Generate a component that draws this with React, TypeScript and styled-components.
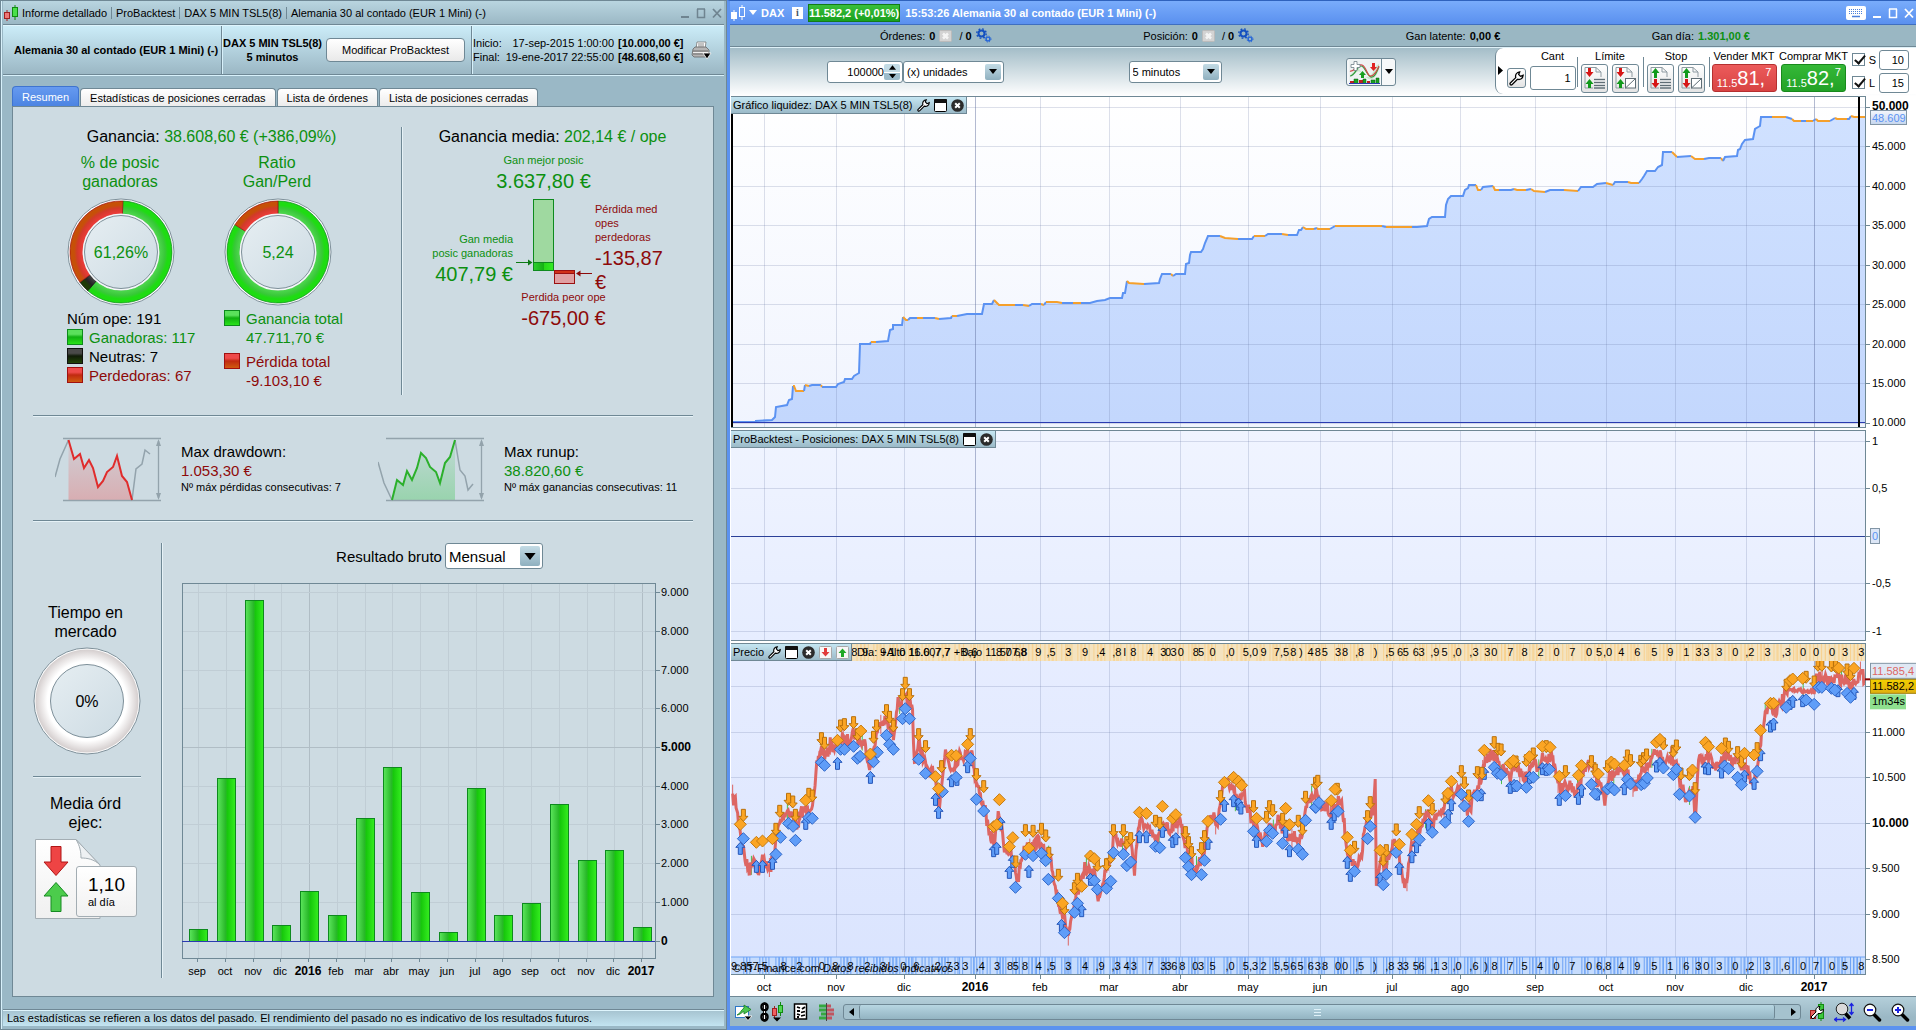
import React, { useLayoutEffect, useRef, useState } from "react";
import styled, { createGlobalStyle, css } from "styled-components";

const GREEN = "#0c9010";
const RED = "#8d0a0a";
const EDGE = "#6f8895";

const Global = createGlobalStyle`
  * { box-sizing: border-box; }
  body { margin: 0; background: #9ab8c6; color: #000; font: 11px/14px "Liberation Sans", Arial, sans-serif; }
  button, input, select { font: inherit; color: inherit; }
  svg { display: block; flex: none; }
  svg text { font-family: "Liberation Sans", Arial, sans-serif; font-size: 11px; }
`;

/* ---------- shared ---------- */

function useSize(w0: number, h0: number) {
  const ref = useRef<HTMLDivElement>(null);
  const [size, setSize] = useState({ w: w0, h: h0 });
  useLayoutEffect(() => {
    const el = ref.current;
    if (!el) return;
    const read = () => setSize({ w: el.clientWidth, h: el.clientHeight });
    read();
    const ro = new ResizeObserver(read);
    ro.observe(el);
    return () => ro.disconnect();
  }, []);
  return { ref, ...size };
}

const Shell = styled.div`
  display: grid;
  grid-template-columns: minmax(0, 727fr) minmax(0, 1189fr);
  height: 100vh;
  min-height: 960px;
`;

const PlainButton = styled.button`
  display: flex;
  align-items: center;
  justify-content: center;
  padding: 0;
  border: 0;
  background: none;
`;

const Field = styled.span<{ $w: number; $h: number }>`
  display: grid;
  align-items: center;
  flex: none;
  width: ${(p) => p.$w}px;
  height: ${(p) => p.$h}px;
  background: #fff;
  border: 1px solid ${EDGE};
  border-radius: 3px;
  > * { grid-area: 1 / 1; }
`;

const NativeSelect = styled.select<{ $size: number }>`
  appearance: none;
  width: 100%;
  height: 100%;
  border: 0;
  background: transparent;
  padding: 0 24px 0 3px;
  font-size: ${(p) => p.$size}px;
`;

const TextInput = styled.input`
  width: 100%;
  height: 100%;
  min-width: 0;
  border: 0;
  background: transparent;
  text-align: right;
  padding: 0 4px;
`;

const AmountInput = styled(TextInput)`
  padding-right: 18px;
`;

const Drop = styled.span`
  justify-self: end;
  display: grid;
  place-items: center;
  width: 16px;
  height: calc(100% - 4px);
  margin-right: 2px;
  border-radius: 2px;
  background: linear-gradient(#c3dbe5, #8fb0bf);
  pointer-events: none;
`;

const BigDrop = styled(Drop)`
  width: 20px;
`;

const Spin = styled(Drop)`
  gap: 1px;
  background: linear-gradient(#c3dbe5 48%, #fff 48%, #fff 54%, #9dbccb 54%);
`;

const Down = ({ w = 8 }: { w?: number }) => (
  <svg width={w} height={w / 2 + 1} viewBox="0 0 8 5"><path d="M0 0H8L4 5Z" /></svg>
);

const Up = () => (
  <svg width="7" height="5" viewBox="0 0 8 5"><path d="M0 5H8L4 0Z" /></svg>
);

const Candles = ({ a, b, la, lb }: { a: string; b: string; la: string; lb: string }) => (
  <svg width="17" height="18" viewBox="0 0 17 18">
    <path d="M4 6V17" stroke={la} />
    <rect x="1.5" y="8.5" width="5" height="6" fill={a} stroke={la} />
    <path d="M12 1V3.500M12 12.500V16" stroke={lb} />
    <rect x="9.5" y="3.5" width="5" height="9" fill={b} stroke={lb} />
  </svg>
);

/* ---------- report window ---------- */

const Report = styled.section`
  display: flex;
  flex-direction: column;
  min-width: 0;
  border: 1px solid ${EDGE};
  padding: 0 2px 3px 2px;
  background: #9ab8c6;
  box-shadow: inset 1px 0 #d8f1fb;
`;

const ReportTitle = styled.header`
  display: flex;
  align-items: center;
  height: 24px;
  flex: none;
  padding: 0 2px 0 0;
  background: linear-gradient(#b9d5e0, #9bb8c5);
  border-bottom: 1px solid ${EDGE};
`;

const Crumb = styled.span`
  padding: 0 4px;
  border-left: 1px solid #6f8895;
  line-height: 12px;
  white-space: nowrap;
  &:first-of-type { border: 0; padding-left: 2px; }
`;

const WinButtons = styled.div<{ $c: string }>`
  display: flex;
  gap: 6px;
  margin-left: auto;
  color: ${(p) => p.$c};
`;

const WinIcons = ({ c }: { c: string }) => (
  <WinButtons $c={c}>
    <PlainButton aria-label="Minimizar"><svg width="10" height="12"><path d="M1 10H9" stroke="currentColor" strokeWidth="2" /></svg></PlainButton>
    <PlainButton aria-label="Maximizar"><svg width="10" height="12"><path d="M1.5 2V10.5H8.500V2M1 2H9" fill="none" stroke="currentColor" strokeWidth="1.500" /></svg></PlainButton>
    <PlainButton aria-label="Cerrar"><svg width="10" height="12"><path d="M1 2L9 10.500M9 2L1 10.500" stroke="currentColor" strokeWidth="1.800" /></svg></PlainButton>
  </WinButtons>
);

const Summary = styled.div`
  display: grid;
  grid-template-columns: 218px 250px 1fr;
  align-items: stretch;
  height: 50px;
  flex: none;
  background: linear-gradient(#cbecf8, #9bb7c4);
  border-top: 1px solid #dff5fd;
  border-bottom: 1px solid ${EDGE};
  box-shadow: 0 1px #d8f1fb;
  > div + div { border-left: 1px solid ${EDGE}; box-shadow: inset 1px 0 #d8f1fb; }
`;

const SumCell = styled.div<{ $bold?: boolean; $gap: number; $left: number }>`
  display: flex;
  align-items: center;
  gap: ${(p) => p.$gap}px;
  padding-left: ${(p) => p.$left}px;
  white-space: nowrap;
  text-align: center;
  font-weight: ${(p) => (p.$bold ? "bold" : "normal")};
`;

const ModifyButton = styled.button`
  width: 139px;
  height: 24px;
  border: 1px solid ${EDGE};
  border-radius: 4px;
  background: linear-gradient(#fff, #e9e9e9);
`;

const Dates = styled.dl`
  display: grid;
  grid-template-columns: auto auto auto;
  column-gap: 4px;
  margin: 0;
  text-align: right;
  dt { text-align: left; }
  dd { margin: 0; }
`;

const TabBar = styled.nav`
  display: flex;
  align-items: flex-end;
  gap: 1px;
  padding: 11px 9px 0;
  flex: none;
`;

const Tab = styled.button<{ $on?: boolean }>`
  height: ${(p) => (p.$on ? 20 : 18)}px;
  padding: 0 9px;
  border: 1px solid ${(p) => (p.$on ? "#3f74cf" : EDGE)};
  border-bottom: 0;
  border-radius: 4px 4px 0 0;
  background: ${(p) => (p.$on ? "linear-gradient(#669af0,#4c84e2)" : "linear-gradient(#fff,#ececec)")};
  color: ${(p) => (p.$on ? "#fff" : "#000")};
  white-space: nowrap;
`;

const Panel = styled.main`
  flex: 1;
  min-height: 0;
  display: flex;
  flex-direction: column;
  margin: 0 10px 12px 9px;
  padding: 0 10px 0 9px;
  border: 1px solid ${EDGE};
  background: #cddbe2;
`;

const Note = styled.footer`
  flex: none;
  height: 17px;
  padding-left: 4px;
  line-height: 17px;
  border-top: 1px solid ${EDGE};
  box-shadow: inset 0 1px #dff5fd;
  background: linear-gradient(#a5c2cf, #c3e4f1);
`;

const Results = styled.section`
  display: grid;
  grid-template-columns: 379px 1fr;
  padding: 20px 0;
`;

const Half = styled.div`
  height: 268px;
  & + & { border-left: 1px solid ${EDGE}; box-shadow: inset 1px 0 #e6f2f7; }
`;

const Headline = styled.h2<{ $c?: string }>`
  margin: 0;
  font-size: 16px;
  line-height: 19px;
  font-weight: normal;
  text-align: center;
  white-space: nowrap;
  color: ${(p) => p.$c || "#000"};
  span { color: ${GREEN}; }
`;

const Gauges = styled.div`
  display: flex;
  padding: 7px 0 0 45px;
`;

const Gauge = styled.div`
  width: 157px;
  font-size: 15px;
  line-height: 19px;
  white-space: nowrap;
`;

const GaugeHead = styled(Headline)`
  width: 106px;
  margin-bottom: 7px;
`;

const Legend = styled.ul`
  list-style: none;
  margin: 3px 0 0;
  padding: 0;
`;

const LegendRow = styled.li<{ $c: string; $gapTop?: boolean }>`
  display: flex;
  gap: 6px;
  color: ${(p) => p.$c};
  margin-top: ${(p) => (p.$gapTop ? 5 : 0)}px;
`;

const swatches = {
  win: "linear-gradient(#5be05b 30%, #10b010 50%, #2ae21a)",
  even: "linear-gradient(#4a4a4a 30%, #101c08 50%, #224408)",
  loss: "linear-gradient(#ee4a4a 30%, #c02a10 50%, #d05a10)",
};

const Swatch = styled.i<{ $k: keyof typeof swatches; $c: string }>`
  width: 16px;
  height: 16px;
  margin-top: 1px;
  flex: none;
  border: 1px solid ${(p) => p.$c};
  background: ${(p) => swatches[p.$k]};
`;

const Average = styled.div<{ $left?: number; $right?: number; $top?: number; $c: string }>`
  padding: ${(p) => p.$top || 0}px ${(p) => p.$right || 0}px 0 ${(p) => p.$left || 0}px;
  text-align: center;
  color: ${(p) => p.$c};
`;

const Small = styled.div`
  font-size: 11px;
  line-height: 14px;
`;

const Large = styled.div`
  margin-top: 2px;
  font-size: 20px;
  line-height: 24px;
`;

const Compare = styled.div`
  display: grid;
  grid-template-columns: 111px 82px 78px;
  height: 97px;
  padding-top: 6px;
`;

const CompareText = styled.div<{ $c: string; $side: "left" | "right" }>`
  color: ${(p) => p.$c};
  text-align: ${(p) => (p.$side === "left" ? "right" : "left")};
  ${(p) => (p.$side === "left" ? css`align-self: end; padding-bottom: 8px;` : css`margin-top: 3px;`)}
`;

const Rule = styled.hr`
  width: auto;
  margin: 0 10px 0 11px;
  border: 0;
  height: 2px;
  flex: none;
  background: linear-gradient(${EDGE} 50%, #e6f2f7 50%);
`;

const Extremes = styled.section`
  display: grid;
  grid-template-columns: 323px 1fr;
  padding: 20px 0 18px 33px;
`;

const Extreme = styled.div`
  display: flex;
  gap: 20px;
  white-space: nowrap;
`;

const ExtremeText = styled.div<{ $c: string }>`
  padding-top: 5px;
  font-size: 15px;
  line-height: 19px;
  b { font-weight: normal; display: block; color: ${(p) => p.$c}; }
`;

const Bottom = styled.section`
  flex: 1;
  min-height: 0;
  display: grid;
  grid-template-columns: 129px minmax(0, 1fr);
  padding: 21px 0 18px 11px;
`;

const Side = styled.div`
  display: flex;
  flex-direction: column;
  justify-content: center;
  padding: 1px 20px 0 0;
  border-right: 1px solid ${EDGE};
  box-shadow: 1px 0 #e6f2f7;
`;

const SideHead = styled(Headline)`
  margin: 0 3px 6px 0;
`;

const SideRule = styled(Rule)`
  margin: 21px 0 16px;
`;

const OrdersCard = styled.div`
  display: grid;
  justify-content: center;
  padding-right: 3px;
  > * { grid-area: 1 / 1; }
`;

const PerDay = styled.div`
  align-self: end;
  justify-self: end;
  width: 61px;
  height: 51px;
  margin-bottom: 3px;
  padding: 8px 0 0 11px;
  border: 1px solid #a3adb3;
  border-radius: 3px;
  background: linear-gradient(#fff, #f1f1f1);
  b { display: block; font-weight: normal; font-size: 19px; line-height: 20px; }
`;

const Monthly = styled.div`
  display: flex;
  flex-direction: column;
  min-width: 0;
`;

const PeriodRow = styled.label`
  display: flex;
  align-items: center;
  justify-content: center;
  gap: 3px;
  margin: 0 0 5px 14px;
  font-size: 15px;
  line-height: 19px;
`;

const ChartBox = styled.div<{ $grow?: number }>`
  position: relative;
  flex: ${(p) => p.$grow || 1} 1 0;
  min-height: 0;
  overflow: hidden;
`;

const polar = (r: number, t: number) => {
  const a = t * 2 * Math.PI;
  return `${54 + r * Math.sin(a)} ${54 - r * Math.cos(a)}`;
};
const ring = (from: number, to: number) => {
  const big = to - from > 0.5 ? 1 : 0;
  return `M${polar(51, from)}A51 51 0 ${big} 1 ${polar(51, to)}L${polar(38, to)}A38 38 0 ${big} 0 ${polar(38, from)}Z`;
};

const Donut = ({ parts, label, color, id }: { parts: [number, number, string][]; label: string; color: string; id: string }) => (
  <svg width="108" height="108" viewBox="0 0 108 108" role="img" aria-label={label}>
    <defs>
      {[["g", "#52d952", "#38c838", "#1edc12"], ["r", "#f03c3c", "#d23a2a", "#c65008"], ["k", "#484848", "#242424", "#1d3a06"]].map(([k, a, b, c]) => (
        <radialGradient key={k} id={id + k} gradientUnits="userSpaceOnUse" cx="54" cy="54" r="51">
          <stop offset="0.74" stopColor={a} /><stop offset="0.86" stopColor={b} /><stop offset="0.92" stopColor={c} /><stop offset="1" stopColor={c} />
        </radialGradient>
      ))}
      <radialGradient id={id + "w"} gradientUnits="userSpaceOnUse" cx="54" cy="54" r="51">
        <stop offset="0.78" stopColor="#fff" /><stop offset="1" stopColor="#d6d0d0" />
      </radialGradient>
      <linearGradient id={id + "c"} x1="0" y1="0" x2="1" y2="1"><stop offset="0" stopColor="#e6eef2" /><stop offset="1" stopColor="#cddbe3" /></linearGradient>
    </defs>
    <circle cx="54" cy="54" r="53" fill="#fff" stroke="#7d8f99" />
    {parts.length === 0 && <circle cx="54" cy="54" r="51.500" fill={`url(#${id}w)`} />}
    {parts.map(([a, b, k]) => <path key={k} d={ring(a, b)} fill={`url(#${id}${k})`} stroke={k === "r" ? "#a01010" : k === "k" ? "#111" : "#0d8a1c"} strokeWidth="0.700" />)}
    {parts.length > 0 && <circle cx="54" cy="54" r="37.500" fill="none" stroke="#f4f7f8" strokeWidth="2" />}
    <circle cx="54" cy="54" r="36.500" fill={`url(#${id}c)`} stroke="#7d8f99" />
    <text x="54" y="60" textAnchor="middle" fill={color} style={{ fontSize: 16 }}>{label}</text>
  </svg>
);

const RangeBars = () => (
  <svg width="82" height="88">
    <defs>
      <linearGradient id="rb"><stop stopColor="#2fd02f" /><stop offset="0.5" stopColor="#15b015" /><stop offset="0.55" stopColor="#25d818" /><stop offset="1" stopColor="#35ec25" /></linearGradient>
    </defs>
    <rect x="20.5" y="0.5" width="20" height="71" fill="#9fd9a0" stroke="#0e8a1e" />
    <rect x="20.5" y="63.5" width="20" height="8" fill="url(#rb)" stroke="#0e8a1e" />
    <rect x="41.5" y="71.5" width="20" height="13" fill="#e0a0a2" stroke="#9a1010" />
    <rect x="41.5" y="71.5" width="20" height="3" fill="#d03018" stroke="#9a1010" />
    <path d="M3 63.5H16" stroke="#0c7a14" /><path d="M15 60.5L19.5 63.5L15 66.5Z" fill="#0c7a14" />
    <path d="M66 74.5H79" stroke={RED} /><path d="M67.5 71.5L63 74.5L67.5 77.5Z" fill={RED} />
  </svg>
);

const Trend = ({ color, fill, line, before, after }: { color: string; fill: string; line: string; before: string; after: string }) => (
  <svg width="106" height="65">
    <defs><linearGradient id={"t" + color.slice(1)} x2="0" y2="1"><stop stopColor={fill} stopOpacity="0.1" /><stop offset="1" stopColor={fill} stopOpacity="0.4" /></linearGradient></defs>
    <polygon points={`13.5,63 ${line} 77,63`} fill={`url(#t${color.slice(1)})`} />
    <g fill="none" stroke="#93a3ac">
      <path d="M8 1.5H106M8 63.5H106M103.5 4V61" strokeWidth="1.3" />
      <polyline points={before} strokeWidth="1.5" /><polyline points={after} strokeWidth="1.5" />
    </g>
    <path d="M101 9L103.5 2L106 9ZM101 56L103.5 63L106 56Z" fill="#93a3ac" />
    <polyline points={line} fill="none" stroke={color} strokeWidth="2" />
  </svg>
);

const OrdersSheet = () => (
  <svg width="103" height="82" viewBox="0 0 103 82">
    <defs>
      <linearGradient id="osp" x2="0" y2="1"><stop stopColor="#fff" /><stop offset="1" stopColor="#f0f0f0" /></linearGradient>
    </defs>
    <path d="M1.5 1.5H42L66 27V80.5H1.5Z" fill="url(#osp)" stroke="#a3adb3" />
    <path d="M42 1.5C46 8 47 14 47 20C53 20 60 21 66 27Z" fill="#eef1f3" stroke="#a3adb3" />
    <path d="M17 8.5H27V24H34L22 37.5L10 24H17Z" fill="#ee4444" stroke="#b01515" />
    <path d="M17 73.5H27V58H34L22 44.5L10 58H17Z" fill="#4ccc4c" stroke="#168a22" />
  </svg>
);

const Printer = () => (
  <svg width="21" height="19" viewBox="0 0 21 19">
    <path d="M5 8L6 1H15L14 8Z" fill="#fff" stroke="#777" strokeWidth="0.8" />
    <path d="M7 3H13M7 5H13" stroke="#888" />
    <path d="M2 8L4 6H15L18 9V14L16 16H3L1 14Z" fill="#b5b5b5" stroke="#666" strokeWidth="0.8" />
    <path d="M2 10H17M2 13H17" stroke="#6e6e6e" /><path d="M2 11.5H17" stroke="#eee" />
    <path d="M12 12H20L16 18Z" fill="#000" stroke="#fff" strokeWidth="0.8" />
  </svg>
);

const MONTHS = ["sep", "oct", "nov", "dic", "2016", "feb", "mar", "abr", "may", "jun", "jul", "ago", "sep", "oct", "nov", "dic", "2017"];
const GROSS = [310, 4190, 8800, 390, 1270, 650, 3180, 4480, 1250, 230, 3930, 650, 970, 3540, 2090, 2340, 340];

const boldAxis = { fontWeight: 700, fontSize: 12 };

const MonthlyChart = () => {
  const { ref, w, h } = useSize(540, 401);
  const left = 20, right = w - 48, bottom = h - 20;
  const y = (v: number) => bottom - ((v + 450) / 9690) * (bottom - 9);
  const step = (right - left - 29) / 16;
  const x = (i: number) => Math.round(left + 16 + i * step);
  const ticks = [...Array(10)].map((_, i) => i);
  return (
    <ChartBox ref={ref}>
      <svg width={w} height={h}>
        <defs>
          <linearGradient id="bar"><stop stopColor="#5ce65c" /><stop offset="0.45" stopColor="#28b828" /><stop offset="0.55" stopColor="#17c80c" /><stop offset="1" stopColor="#35ee20" /></linearGradient>
        </defs>
        <g shapeRendering="crispEdges">
          {MONTHS.map((m, i) => <path key={i} d={`M${x(i) + 0.5} 9V${bottom}`} stroke={m[0] === "2" ? "#b0bdc5" : "#c0cdd5"} />)}
          {ticks.map((i) => <path key={i} d={`M${left} ${Math.round(y(i * 1000)) + 0.5}H${right}`} stroke={i === 5 ? "#b0bdc5" : "#c0cdd5"} />)}
          {GROSS.map((v, i) => <rect key={i} x={x(i) - 8.5} y={Math.round(y(v)) + 0.5} width="18" height={Math.round(y(0)) - Math.round(y(v))} fill="url(#bar)" stroke="#0e8a1e" />)}
          <rect x={left + 0.5} y="9.5" width={right - left} height={bottom - 9} fill="none" stroke={EDGE} />
          <path d={`M${left} ${Math.round(y(0)) + 0.5}H${right}`} stroke="#2a3ab0" />
          {MONTHS.map((_, i) => <path key={i} d={`M${x(i) - 0.5} ${bottom}V${bottom + 4}`} stroke={EDGE} />)}
          {ticks.map((i) => <path key={i} d={`M${right} ${Math.round(y(i * 1000)) + 0.5}H${right + 5}`} stroke={EDGE} />)}
        </g>
        {MONTHS.map((m, i) => <text key={i} x={x(i) - 1} y={bottom + 17} textAnchor="middle" style={m[0] === "2" ? boldAxis : undefined}>{m}</text>)}
        {ticks.map((i) => <text key={i} x={right + 6} y={y(i * 1000) + 4} style={i % 5 === 0 ? boldAxis : undefined}>{i ? `${i}.000` : "0"}</text>)}
      </svg>
    </ChartBox>
  );
};

const ReportWindow = () => (
  <Report>
    <ReportTitle>
      <Candles a="#ee7777" b="#4ae04a" la="#a02020" lb="#118a11" />
      <Crumb>Informe detallado</Crumb><Crumb>ProBacktest</Crumb><Crumb>DAX 5 MIN TSL5(8)</Crumb>
      <Crumb>Alemania 30 al contado (EUR 1 Mini) (-)</Crumb>
      <WinIcons c="#6f8490" />
    </ReportTitle>
    <Summary>
      <SumCell $bold $gap={0} $left={11}>Alemania 30 al contado (EUR 1 Mini) (-)</SumCell>
      <SumCell $gap={4} $left={1}>
        <b>DAX 5 MIN TSL5(8)<br />5 minutos</b>
        <ModifyButton>Modificar ProBacktest</ModifyButton>
      </SumCell>
      <SumCell $gap={8} $left={1}>
        <Dates>
          <dt>Inicio:</dt><dd>17-sep-2015 1:00:00</dd><dd><b>[10.000,00 €]</b></dd>
          <dt>Final:</dt><dd>19-ene-2017 22:55:00</dd><dd><b>[48.608,60 €]</b></dd>
        </Dates>
        <PlainButton aria-label="Imprimir"><Printer /></PlainButton>
      </SumCell>
    </Summary>
    <TabBar>
      <Tab $on>Resumen</Tab><Tab>Estadísticas de posiciones cerradas</Tab><Tab>Lista de órdenes</Tab><Tab>Lista de posiciones cerradas</Tab>
    </TabBar>
    <Panel>
      <Results>
        <Half>
          <Headline>Ganancia: <span>38.608,60 € (+386,09%)</span></Headline>
          <Gauges>
            <Gauge>
              <GaugeHead $c={GREEN}>% de posic<br />ganadoras</GaugeHead>
              <Donut id="d1" label="61,26%" color={GREEN} parts={[[0.006, 0.6126, "g"], [0.6126, 0.649, "k"], [0.649, 1.006, "r"]]} />
              <Legend>
                <LegendRow $c="#000">Núm ope: 191</LegendRow>
                <LegendRow $c={GREEN}><Swatch $k="win" $c="#0d8a1c" />Ganadoras: 117</LegendRow>
                <LegendRow $c="#000"><Swatch $k="even" $c="#111" />Neutras: 7</LegendRow>
                <LegendRow $c={RED}><Swatch $k="loss" $c="#a01010" />Perdedoras: 67</LegendRow>
              </Legend>
            </Gauge>
            <Gauge>
              <GaugeHead $c={GREEN}>Ratio<br />Gan/Perd</GaugeHead>
              <Donut id="d2" label="5,24" color={GREEN} parts={[[0, 0.84, "g"], [0.84, 1, "r"]]} />
              <Legend>
                <LegendRow $c={GREEN}><Swatch $k="win" $c="#0d8a1c" /><span>Ganancia total<br />47.711,70 €</span></LegendRow>
                <LegendRow $c={RED} $gapTop><Swatch $k="loss" $c="#a01010" /><span>Pérdida total<br />-9.103,10 €</span></LegendRow>
              </Legend>
            </Gauge>
          </Gauges>
        </Half>
        <Half>
          <Headline>Ganancia media: <span>202,14 € / ope</span></Headline>
          <Average $c={GREEN} $right={18} $top={7}>
            <Small>Gan mejor posic</Small>
            <Large>3.637,80 €</Large>
          </Average>
          <Compare>
            <CompareText $c={GREEN} $side="left">
              <Small>Gan media<br />posic ganadoras</Small>
              <Large>407,79 €</Large>
            </CompareText>
            <RangeBars />
            <CompareText $c={RED} $side="right">
              <Small>Pérdida med opes perdedoras</Small>
              <Large>-135,87 €</Large>
            </CompareText>
          </Compare>
          <Average $c={RED} $left={22}>
            <Small>Perdida peor ope</Small>
            <Large>-675,00 €</Large>
          </Average>
        </Half>
      </Results>
      <Rule />
      <Extremes>
        <Extreme>
          <Trend color="#e02c2c" fill="#e86a6a" before="0,40 5,22 13.5,3" after="77,63 81,32 87,27 90,13 95,17"
            line="13.5,3 19,22 25,17 29,31 34,23 38,31 43,50 48,44 52,35 58,30 62,19 67,39 72,45 77,63" />
          <ExtremeText $c={RED}>Max drawdown:<b>1.053,30 €</b><Small>Nº máx pérdidas consecutivas: 7</Small></ExtremeText>
        </Extreme>
        <Extreme>
          <Trend color="#2bb02b" fill="#4cc860" before="0,25 6,46 14,63" after="77,3 82,33 87,39 90,53 95,47"
            line="14,63 19,43 25,48 29,34 34,43 39,31 43,16 48,21 52,30 58,35 62,46 67,26 72,20 77,3" />
          <ExtremeText $c={GREEN}>Max runup:<b>38.820,60 €</b><Small>Nº máx ganancias consecutivas: 11</Small></ExtremeText>
        </Extreme>
      </Extremes>
      <Rule />
      <Bottom>
        <Side>
          <SideHead>Tiempo en<br />mercado</SideHead>
          <Donut id="d3" label="0%" color="#000" parts={[]} />
          <SideRule />
          <SideHead>Media órd<br />ejec:</SideHead>
          <OrdersCard>
            <OrdersSheet />
            <PerDay><b>1,10</b>al día</PerDay>
          </OrdersCard>
        </Side>
        <Monthly>
          <PeriodRow>
            Resultado bruto
            <Field $w={98} $h={26}>
              <NativeSelect $size={15} defaultValue="Mensual"><option>Mensual</option><option>Anual</option></NativeSelect>
              <BigDrop><Down w={12} /></BigDrop>
            </Field>
          </PeriodRow>
          <MonthlyChart />
        </Monthly>
      </Bottom>
    </Panel>
    <Note>Las estadísticas se refieren a los datos del pasado. El rendimiento del pasado no es indicativo de los resultados futuros.</Note>
  </Report>
);

/* ---------- trading window ---------- */

const Trading = styled.section`
  display: flex;
  flex-direction: column;
  min-width: 0;
  border: solid #5b92f0;
  border-width: 1px 0 4px 3px;
  border-top-color: #2f62bd;
  background: #fff;
`;

const TradeTitle = styled.header`
  display: flex;
  align-items: center;
  height: 24px;
  flex: none;
  padding: 0 2px 0 0;
  color: #fff;
  font-weight: bold;
  white-space: nowrap;
  background: linear-gradient(#79acfb, #5a90ef);
  border-bottom: 1px solid #3f6fc0;
`;

const Symbol = styled.button`
  display: flex;
  align-items: center;
  gap: 4px;
  width: 40px;
  padding: 0 0 0 2px;
  border: 0;
  background: none;
  font-weight: bold;
`;

const Info = styled.button`
  width: 11px;
  height: 12px;
  margin: 0 5px;
  padding: 0;
  border: 0;
  background: #fff;
  color: #456;
  font: bold 10px/12px "Liberation Serif", serif;
`;

const Quote = styled.span`
  height: 18px;
  line-height: 16px;
  margin-right: 5px;
  border: 1px solid #137a18;
  background: linear-gradient(#39bf3c, #19a01d);
`;

const KeyboardIcon = () => (
  <svg width="20" height="14" viewBox="0 0 20 14">
    <rect width="20" height="14" rx="2" fill="#fff" />
    <path d="M3 3.500H17M3 5.500H17M3 7.500H17" stroke="#4b7fdb" strokeDasharray="1 1" /><path d="M6 10.500H14" stroke="#4b7fdb" strokeWidth="1.500" />
  </svg>
);

const Account = styled.div`
  display: flex;
  justify-content: space-between;
  align-items: center;
  height: 22px;
  flex: none;
  padding: 0 166px 0 150px;
  white-space: nowrap;
  background: #9ab7c3;
  border-bottom: 1px solid ${EDGE};
`;

const Stat = styled.span`
  display: flex;
  align-items: center;
  gap: 4px;
`;

const Gain = styled.b`
  color: ${GREEN};
`;

const Cancel = () => (
  <PlainButton aria-label="Cancelar"><svg width="13" height="12"><rect x="0.5" y="0.5" width="12" height="11" rx="1" fill="#d3d3d3" stroke="#bbb" /><path d="M4 3.500L9 8.500M9 3.500L4 8.500" stroke="#f4f4f4" strokeWidth="2.500" /></svg></PlainButton>
);

const Gears = () => (
  <svg width="16" height="15" viewBox="0 0 16 15">
    <g fill="none"><circle cx="5.500" cy="5.500" r="3" stroke="#1450c0" strokeWidth="2" /><circle cx="5.500" cy="5.500" r="4.700" stroke="#1450c0" strokeWidth="1.400" strokeDasharray="1.800 1.900" />
      <circle cx="12" cy="11" r="1.900" stroke="#2465d8" strokeWidth="1.400" /><circle cx="12" cy="11" r="3" stroke="#2465d8" strokeDasharray="1.200 1.200" /></g>
  </svg>
);

const Toolbar = styled.div`
  display: grid;
  grid-template-columns: 1fr auto;
  height: 49px;
  flex: none;
  background: linear-gradient(#a2bcc7, #fff);
  box-shadow: inset 0 1px #dff1f8;
`;

const Tools = styled.div`
  display: flex;
  align-items: center;
  padding: 0 99px 0 97px;
`;

const ToolGap = styled.span`
  flex: 124 1 0;
`;

const IndicatorButton = styled.button`
  display: flex;
  align-items: center;
  width: 50px;
  height: 28px;
  padding: 0 0 0 2px;
  border: 1px solid ${EDGE};
  border-radius: 3px;
  background: #f6f8f9;
  > span { display: grid; place-items: center; height: 100%; width: 14px; border-left: 1px solid ${EDGE}; margin-left: 1px; }
`;

const OrderPad = styled.div`
  display: flex;
  align-items: center;
  width: 421px;
  margin: 1px 0 2px;
  padding-left: 2px;
  background: #fff;
  border-left: 1px solid ${EDGE};
  border-radius: 8px 0 0 8px;
  white-space: nowrap;
`;

const PadColumn = styled.div<{ $w: number; $line?: boolean }>`
  display: grid;
  grid-template-rows: 14px 30px;
  width: ${(p) => p.$w}px;
  justify-items: center;
  align-items: center;
  ${(p) => p.$line && css`background: linear-gradient(${EDGE}, ${EDGE}) left 8px / 1px 30px no-repeat;`}
`;

const PadRow = styled.div`
  display: flex;
  align-items: center;
  gap: 4px;
`;

const Square = styled.button<{ $w: number; $h: number }>`
  display: grid;
  place-items: center;
  width: ${(p) => p.$w}px;
  height: ${(p) => p.$h}px;
  padding: 0;
  border: 1px solid ${EDGE};
  border-radius: 3px;
  background: linear-gradient(#fff, #e4e4e4);
`;

const Market = styled.button<{ $buy?: boolean }>`
  width: 65px;
  height: 28px;
  display: flex;
  justify-content: center;
  align-items: flex-end;
  padding: 0;
  border: 1px solid ${(p) => (p.$buy ? "#188a1c" : "#b53030")};
  border-radius: 3px;
  color: #fff;
  background: ${(p) => (p.$buy ? "linear-gradient(#35b838,#22a226)" : "linear-gradient(#ec5b5b,#d84343)")};
  small { font-size: 11px; line-height: 16px; }
  b { font-weight: normal; font-size: 20px; line-height: 26px; }
  sup { font-size: 11px; line-height: 14px; align-self: flex-start; }
`;

const Checks = styled.div`
  display: grid;
  gap: 3px;
  margin-left: 5px;
`;

const CheckLine = styled.div`
  display: flex;
  align-items: center;
  gap: 3px;
  label { display: flex; align-items: center; gap: 4px; width: 24px; }
`;

const Tick = styled.input`
  appearance: none;
  position: relative;
  width: 13px;
  height: 13px;
  margin: 0;
  border: 1px solid ${EDGE};
  background: #fff;
  &:checked::after {
    content: "";
    position: absolute;
    left: 4px;
    top: -1px;
    width: 4px;
    height: 9px;
    border: solid #111;
    border-width: 0 2px 2px 0;
    transform: rotate(40deg);
  }
`;

const Panes = styled.div`
  flex: 1;
  min-height: 0;
  display: flex;
  flex-direction: column;
  gap: 2px;
`;

const PaneTag = styled.div`
  position: absolute;
  left: 1px;
  top: 1px;
  display: flex;
  align-items: center;
  gap: 3px;
  height: 17px;
  padding: 0 2px;
  white-space: nowrap;
  background: linear-gradient(#c5e6f2, #9bbac8);
  border: solid ${EDGE};
  border-width: 0 1px 1px 0;
  button { margin-left: 1px; }
`;

const AxisBox = styled.div`
  height: 21px;
  flex: none;
  overflow: hidden;
`;

const StatusBar = styled.footer`
  display: flex;
  align-items: center;
  gap: 8px;
  height: 30px;
  flex: none;
  padding: 0 6px 0 5px;
  background: linear-gradient(#b4cfda, #9bb8c5 20px, #9bb8c5);
  border-top: 1px solid ${EDGE};
`;

const ScrollTrack = styled.div`
  flex: 1;
  display: flex;
  height: 16px;
  border: 1px solid ${EDGE};
  border-radius: 3px;
  background: #a5c2ce;
`;

const Thumb = styled.div`
  flex: 1;
  display: grid;
  place-items: center;
  margin: 0 11px 0 1px;
  border: solid ${EDGE};
  border-width: 0 1px;
  border-radius: 2px;
  background: linear-gradient(#b7d6e2, #93b4c2);
`;

const ScrollButton = styled(PlainButton)`
  width: 14px;
`;

const WrenchIcon = ({ size = 13 }: { size?: number }) => (
  <svg width={size} height={size} viewBox="0 0 14 14">
    <path d="M1.200 11.200L6.300 6.200C5.600 3.500 7.200 1 10 0.800L9 3.200L10.700 5L13.200 4C13 7 10.500 8.500 7.900 7.700L2.800 12.800C1.500 13.600 0.400 12.300 1.200 11.200Z" fill="#fff" stroke="#000" strokeWidth="1.200" />
  </svg>
);
const WindowIcon = () => (
  <svg width="13" height="13"><rect x="0.5" y="0.5" width="12" height="12" rx="1" fill="#fff" stroke="#000" /><rect width="13" height="4" rx="1" fill="#111" /></svg>
);
const CloseIcon = () => (
  <svg width="13" height="13"><circle cx="6.500" cy="6.500" r="6.300" fill="#2b2b2b" /><path d="M4.200 4.200L8.800 8.800M8.800 4.200L4.200 8.800" stroke="#fff" strokeWidth="2" /></svg>
);
const ArrowPage = ({ up }: { up?: boolean }) => (
  <svg width="13" height="13"><rect x="0.5" y="0.5" width="12" height="12" rx="1" fill="#f7f7f7" stroke="#a8a8a8" />
    {up ? <path d="M5 11V7H2.500L6.500 2.500L10.500 7H8V11Z" fill="#20a828" /> : <path d="M5 2V6H2.500L6.500 10.500L10.500 6H8V2Z" fill="#e03a3a" />}
  </svg>
);

const OrderIcon = ({ stop, split }: { stop?: boolean; split?: boolean }) => {
  const top = stop ? <path d="M4 11V6H1.500L5.500 1L9.500 6H7V11Z" fill="#129a1c" /> : <path d="M4 1V5H1.500L5.500 10L9.500 5H7V1Z" fill="#d61616" />;
  const low = stop ? <path d="M4 12V16H1.500L5.500 21L9.500 16H7V12Z" fill="#d61616" /> : <path d="M4 21V17H1.500L5.500 12L9.500 17H7V21Z" fill="#129a1c" />;
  return (
    <svg width="22" height="22">
      <path d="M1 0.500H12L17 5V10M1 0.500V21H9M12 0.500V5H17" fill="none" stroke="#8f9ba2" />
      {top}{low}
      {split ? <g><rect x="10.500" y="11.500" width="10" height="9.500" fill="#fff" stroke="#5f6d75" /><path d="M10.500 21L20.500 11.500" stroke="#5f6d75" /></g>
        : <g><rect x="10" y="11" width="11" height="10.500" fill="#fff" /><path d="M10 12.500H21M10 15.500H21M10 18.500H21M10 21H21" stroke="#5f6d75" strokeWidth="1.600" /></g>}
    </svg>
  );
};

const IndicatorIcon = () => (
  <svg width="31" height="25" viewBox="0 0 31 25">
    <rect width="31" height="25" fill="#eef2f3" />
    <path d="M1 16C4 14 6 10 9 10S14 18 18 18S25 12 27 7L30 5V10C27 20 22 22 18 19S10 8 6 15Z" fill="#bfe3bf" opacity="0.8" />
    <path d="M1 17C6 17 8 7 12 7S19 19 23 18S28 11 30 8" fill="none" stroke="#2f9a3a" strokeWidth="1.200" />
    <path d="M1 12C5 14 8 4 13 6S18 18 22 17S28 12 30 7" fill="none" stroke="#d04848" strokeWidth="1.200" />
    <path d="M23 4V8H21L24.500 12L28 8H26V4Z" fill="#e02222" /><path d="M12 19V16H10L13.500 12L17 16H15V19Z" fill="#17a01e" />
    <path d="M5 2.500H8V5.500H11V8.500H8V11.500H5V8.500H2V5.500H5Z" fill="#fff" stroke="#6f7f88" strokeWidth="0.800" />
    <path d="M1 24V22H5V24M10 24V21H14V24M18 24V22H21V24" fill="#c02020" /><path d="M5 24V20H9V24M14 24V20H17V24M22 24V21H26V24M27 24V19H30V24" fill="#18a020" stroke="#0a5a10" strokeWidth="0.500" /><path d="M0 24.500H31" stroke="#2a3ab0" />
  </svg>
);

/* Plot geometry of the price window: 1134 px of bars followed by the scale. */
const PLOT = 1134;
const SCALE = 52;
const MONTH_MARKS: [number, string][] = [[34, "oct"], [106, "nov"], [174, "dic"], [245, "2016"], [310, "feb"], [379, "mar"], [450, "abr"], [518, "may"], [590, "jun"], [662, "jul"], [730, "ago"], [805, "sep"], [876, "oct"], [945, "nov"], [1016, "dic"], [1084, "2017"]];

const usePlot = (h0: number) => {
  const size = useSize(PLOT + SCALE, h0);
  const kx = (size.w - SCALE) / PLOT;
  const ky = size.h / h0;
  return { ...size, kx, ky, right: size.w - SCALE + 1, x: (v: number) => v * kx, y: (v: number) => v * ky };
};

const GridLines = ({ x, h, right, rows }: { x: (v: number) => number; h: number; right: number; rows: number[] }) => (
  <g shapeRendering="crispEdges" stroke="#5a6a9a">
    {MONTH_MARKS.map(([v, m]) => <path key={v} d={`M${Math.round(x(v)) + 0.5} 1V${h}`} opacity={m[0] === "2" ? 0.45 : 0.2} />)}
    {rows.map((v) => <path key={v} d={`M1 ${Math.round(v) + 0.5}H${right}`} opacity="0.2" />)}
    {rows.map((v) => <path key={v} d={`M${right} ${Math.round(v) + 0.5}h5`} stroke={EDGE} />)}
  </g>
);

const Frame = ({ h, right }: { h: number; right: number }) => (
  <path d={`M1 0.500H${right + 0.5}V${h - 0.5}H1`} fill="none" stroke={EDGE} shapeRendering="crispEdges" />
);

const EQUITY =
  "b 2,325 25,325 25,324 41,323 44,320 45,310 56,308 58,303 61,302 62,289 o 63,289 65,294 73,294 b 74,288 o 78,289 b 81,288 90,288 o 91,290 b 105,290 107,287 113,285 114,282 121,282 123,279 128,276 129,247 139,247 140,245 o 145,245 b 157,244 159,233 162,232 162,228 171,228 172,220 o 175,223 177,223 b 179,221 186,221 o 192,221 b 204,221 o 208,222 b 220,221 221,219 o 226,219 b 236,217 251,217 253,207 261,207 263,203 o 268,208 284,208 b 292,208 o 298,209 b 301,207 310,207 o 313,208 b 315,205 o 326,205 331,206 b 342,206 o 350,206 b 359,206 366,204 374,203 379,201 391,201 392,196 394,196 396,184 o 398,186 413,187 b 428,186 429,182 431,177 440,177 o 442,179 b 445,177 454,177 455,167 458,166 459,158 460,155 470,155 472,152 474,146 477,139 489,139 o 494,141 507,142 b 521,142 523,139 o 534,139 b 537,137 551,137 o 557,138 b 566,138 568,133 570,133 572,130 o 575,132 583,132 b 586,131 o 587,132 599,132 b 604,129 o 616,129 651,129 b 655,130 o 681,130 b 686,130 696,129 698,122 701,120 714,120 715,108 717,102 720,99 732,99 734,93 737,91 738,88 745,88 o 747,93 750,93 b 752,90 762,89 o 764,93 768,93 b 780,93 783,92 o 786,93 795,93 b 800,92 o 803,94 814,95 b 819,93 833,93 o 847,94 b 850,90 862,90 866,87 875,86 o 882,88 b 884,85 897,85 o 900,86 908,86 b 911,82 913,79 916,74 924,74 927,70 931,68 932,55 941,55 o 946,60 b 960,59 o 964,62 973,62 b 978,61 990,61 o 992,64 b 994,60 1006,59 1007,53 1009,52 1011,47 1014,43 1022,42 1024,32 1029,29 1030,20 1041,20 o 1055,20 b 1061,22 o 1063,24 1070,24 b 1075,24 o 1082,24 b 1085,22 o 1087,24 1099,24 b 1104,21 o 1106,22 1116,22 b 1118,22 1120,19 o 1123,20 1134,20";

const parseEquity = () => {
  const segs: { c: string; p: number[][] }[] = [];
  let last: number[] | null = null;
  EQUITY.split(" ").forEach((t) => {
    if (t.length === 1) segs.push({ c: t === "b" ? "#5b92f2" : "#f5a02c", p: last ? [last] : [] });
    else {
      last = t.split(",").map(Number);
      segs[segs.length - 1].p.push(last);
    }
  });
  return segs;
};
const EQUITY_SEGMENTS = parseEquity();

const EquityPane = () => {
  const { ref, w, h, x, y, right } = usePlot(332);
  const str = (p: number[][]) => p.map(([a, b]) => `${x(a + 1)},${y(b + 1)}`).join(" ");
  const all = EQUITY_SEGMENTS.flatMap((s) => s.p);
  const levels = [10.5, 50, 89.5, 129, 168.5, 208, 247.5, 287, 326.5].map(y);
  return (
    <ChartBox ref={ref} $grow={332}>
      <svg width={w} height={h}>
        <defs>
          <linearGradient id="eqbg" x2="0" y2="1"><stop stopColor="#fff" /><stop offset="1" stopColor="#f0f4fe" /></linearGradient>
          <linearGradient id="eqf" x2="0" y2="1"><stop stopColor="#d0e1ff" /><stop offset="1" stopColor="#c3d7fd" /></linearGradient>
          <linearGradient id="lab" x2="0" y2="1"><stop stopColor="#f4f7fd" /><stop offset="1" stopColor="#c5d6ee" /></linearGradient>
        </defs>
        <rect x="1" width={right} height={h} fill="url(#eqbg)" />
        <polygon points={`2,${y(326)} ${str(all)} ${right},${y(326)}`} fill="url(#eqf)" />
        <GridLines x={x} h={h} right={right} rows={levels} />
        {EQUITY_SEGMENTS.map((s, i) => <polyline key={i} points={str(s.p)} fill="none" stroke={s.c} strokeWidth="2" />)}
        <path d={`M1 ${Math.round(y(326)) + 0.5}H${right}`} stroke="#2a3ab0" shapeRendering="crispEdges" />
        <path d={`M2 18V${h}M${right - 6} 1V${h}`} stroke="#000" strokeWidth="2" shapeRendering="crispEdges" />
        <Frame h={h} right={right} />
        {levels.map((v, i) => i !== 0 && <text key={i} x={right + 7} y={v + (i === 8 ? 3 : 4)}>{`${50 - i * 5}.000`}</text>)}
        <text x={right + 7} y={levels[0] + 3} style={boldAxis}>50.000</text>
        <rect x={right + 5.5} y={y(21) - 6.5} width="36" height="14" fill="url(#lab)" stroke="#8295a5" />
        <text x={right + 7} y={y(21) + 5} fill="#5b92f2">48.609</text>
      </svg>
      <PaneTag>Gráfico liquidez: DAX 5 MIN TSL5(8)
        <PlainButton aria-label="Configurar"><WrenchIcon /></PlainButton><PlainButton aria-label="Ventana"><WindowIcon /></PlainButton><PlainButton aria-label="Cerrar"><CloseIcon /></PlainButton>
      </PaneTag>
    </ChartBox>
  );
};

const PositionPane = () => {
  const { ref, w, h, x, y, right } = usePlot(211);
  const levels = [11, 58, 106, 153, 201].map(y);
  return (
    <ChartBox ref={ref} $grow={211}>
      <svg width={w} height={h}>
        <defs><linearGradient id="pobg" x2="0" y2="1"><stop stopColor="#f0f4ff" /><stop offset="1" stopColor="#e6edff" /></linearGradient></defs>
        <rect x="1" width={right} height={h} fill="url(#pobg)" />
        <GridLines x={x} h={h} right={right} rows={levels} />
        <path d={`M1 ${Math.round(levels[2]) + 0.5}H${right}`} stroke="#2b4098" shapeRendering="crispEdges" />
        <Frame h={h} right={right} />
        {["1", "0,5", "0", "-0,5", "-1"].map((t, i) => i !== 2 && <text key={t} x={right + 7} y={levels[i] + 4}>{t}</text>)}
        <rect x={right + 5.5} y={levels[2] - 7.5} width="9" height="15" fill="#dce6f6" stroke="#8295a5" />
        <text x={right + 7} y={levels[2] + 4} fill="#5b92f2">0</text>
      </svg>
      <PaneTag>ProBacktest - Posiciones: DAX 5 MIN TSL5(8)
        <PlainButton aria-label="Ventana"><WindowIcon /></PlainButton><PlainButton aria-label="Cerrar"><CloseIcon /></PlainButton>
      </PaneTag>
    </ChartBox>
  );
};

const HALF = 1544;
const pairs = (s: string, dx: number): [number, number][] =>
  s.split(";").map((t) => { const [a, b] = t.split(","); return [+a + dx, +b]; });

const SELL_ARROW = [
  ...pairs("48,526;133,568;143,514;166,478;177,486;184,526;219,463;228,468;252,296;260,310;302,258;312,254;336,248;346,284;388,292;396,258;422,212;430,232;440,258;464,164;471,130;482,164;506,284;524,320;566,380;641,284;657,404;676,440;760,666;785,572;805,574;827,568;838,588;846,640;871,706;887,806;913,746;921,718;973,676;997,674;1008,652;1015,572;1041,572;1050,608;1060,596;1125,544;1136,550;1203,578;1211,608;1219,638;1245,626;1253,590;1295,470;1381,500;1415,532;1423,500;1431,512;1457,538;1498,544;1509,568;1517,472;1543,430", 0),
  ...pairs("5,424;56,448;101,622;135,530;142,488;176,661;184,632;210,570;270,518;304,508;338,474;380,395;388,429;399,468;422,398;434,400;466,308;476,328;484,330;523,366;550,362;568,342;602,320;652,395;720,365;730,390;762,380;814,348;822,362;849,364;856,356;864,345;908,312;934,334;942,318;954,402;976,404;991,446;1070,312;1078,322;1102,338;1112,366;1153,326;1229,136;1281,112;1302,126;1312,76;1322,76;1347,78;1358,80;1388,90;1397,104", HALF),
];
const SELL_DIAMOND = [
  ...pairs("40,553;82,607;98,603;124,596;211,481;294,301;355,273;380,342;550,410;558,446;592,346;604,347;634,313;702,560;710,554;717,479;743,620;752,593;794,624;882,790;932,739;955,648;965,656;1083,517;1101,520;1143,499;1170,535;1178,524;1262,544;1305,427;1329,412;1342,424;1350,436;1389,535;1465,505;1475,554", 0),
  ...pairs("40,482;50,448;82,592;90,631;168,631;218,613;251,583;263,553;294,482;345,460;354,424;440,331;508,370;516,362;558,350;592,319;612,322;636,409;686,406;694,377;738,402;772,366;780,372;806,376;890,307;899,298;984,390;1018,307;1026,320;1060,325;1120,340;1145,345;1162,271;1188,190;1196,190;1239,122;1246,117;1272,115;1366,84;1406,85", HALF),
];
const BUY_DIAMOND = [
  ...pairs("48,596;133,643;145,592;166,550;178,559;184,601;219,533;228,535;252,367;260,376;302,328;312,328;336,319;346,355;353,349;388,365;398,337;422,286;430,313;440,328;464,236;471,206;482,236;506,358;524,400;568,455;604,412;641,355;657,478;676,513;759,742;785,643;805,647;827,640;838,662;845,718;871,775;887,878;913,817;921,790;965,722;973,748;997,745;1008,724;1015,638;1041,643;1050,677;1060,666;1125,619;1136,623;1203,653;1211,680;1219,704;1245,704;1253,661;1295,538;1381,574;1415,604;1423,571;1431,580;1457,610;1498,628;1509,643;1517,541;1543,502", 0),
  ...pairs("0,502;8,488;58,514;101,694;135,596;142,559;176,734;184,703;210,637;270,598;304,577;338,547;380,463;388,498;399,544;422,467;466,382;474,400;484,404;525,438;550,442;568,412;610,388;652,467;720,433;730,462;762,447;772,442;780,450;814,418;822,432;850,434;858,430;866,414;908,384;934,404;942,388;950,463;976,468;991,532;1068,378;1078,386;1102,412;1112,434;1153,394;1229,202;1281,180;1302,193;1314,142;1322,142;1347,145;1356,150;1388,160;1397,172", HALF),
];
const BUY_ARROW = [
  ...pairs("40,625;82,679;98,679;124,670;211,550;294,370;380,412;550,478;558,517;592,422;606,418;634,380;702,632;710,625;720,550;743,697;752,664;794,694;879,856;932,812;955,718;1083,590;1101,590;1143,574;1170,604;1178,596;1262,610;1305,496;1329,482;1342,492;1348,504;1389,604;1465,574;1475,632", 0),
  ...pairs("40,550;48,524;82,667;90,706;168,716;218,685;251,650;263,620;294,553;346,525;354,494;432,464;440,400;508,442;518,436;558,412;592,386;602,388;636,478;686,475;694,450;736,462;806,446;890,378;899,370;1018,384;1026,386;1060,396;1120,408;1145,430;1162,344;1188,258;1196,252;1239,190;1246,184;1272,182;1364,152;1406,160", HALF),
];
const PRICE = [
  ...pairs("20,480;27,480;35,540;50,640;55,670;65,690;75,650;90,700;100,640;110,690;120,680;130,620;140,560;155,520;165,510;180,530;190,560;200,515;215,510;233,480;240,380;250,325;265,350;275,310;290,330;300,300;320,300;335,275;350,305;365,310;380,385;390,310;405,250;420,245;440,290;450,190;465,185;480,180;490,210;495,370;508,310;520,360;530,400;540,385;550,430;560,500;568,400;576,335;590,385;600,370;615,345;630,345;645,330;655,420;665,460;680,510;690,590;705,600;716,515;730,620;745,640;755,670;765,725;775,650;790,610;805,620;820,600;835,640;850,660;865,750;878,810;890,850;897,885;905,850;915,790;925,740;940,685;955,700;965,690;975,770;985,730;995,690;1005,660;1015,600;1030,600;1045,615;1060,605;1070,690;1080,560;1090,545;1105,570;1120,590;1130,610;1145,540;1160,570;1175,550;1190,540;1200,600;1215,650;1230,690;1240,670;1250,640;1262,560;1275,525;1287,565;1300,440;1312,410;1325,445;1340,490;1355,455;1370,520;1385,560;1405,610;1420,560;1435,570;1445,540;1460,570;1475,600;1490,590;1508,590;1520,500;1535,470", 0),
  ...pairs("0,455;15,495;30,495;40,530;50,490;65,485;72,530;80,620;95,670;108,690;120,640;128,560;140,540;150,500;155,430;158,740;170,660;180,700;190,650;205,610;218,650;230,735;240,700;250,620;265,580;280,540;295,525;305,570;318,510;335,510;350,465;370,440;385,480;398,520;410,480;430,420;440,375;455,345;470,350;485,385;500,400;510,415;520,370;535,400;550,415;565,370;580,380;592,345;605,360;615,345;628,400;640,450;655,440;670,440;675,470;690,430;700,390;710,365;720,370;735,420;745,430;755,480;765,410;785,400;805,395;820,410;835,440;850,400;865,375;880,350;895,335;910,370;925,360;942,365;955,440;970,480;985,450;992,530;997,400;1000,345;1012,370;1020,340;1030,350;1045,380;1060,360;1075,340;1085,370;1100,360;1110,380;1125,370;1140,440;1150,400;1160,320;1172,230;1185,190;1200,215;1215,190;1225,165;1240,150;1260,150;1280,155;1300,155;1310,110;1325,120;1345,125;1365,110;1380,125;1390,110;1397,140;1410,115;1425,105;1436,118", HALF),
];

/* Adds intraday swings between the session closes. */
const intraday = () => {
  let seed = 7;
  const rnd = () => ((seed = (seed * 16807) % 2147483647) / 2147483647) * 2 - 1;
  const out: [number, number][] = [];
  for (let i = 0; i < PRICE.length - 1; i++) {
    const [x0, y0] = PRICE[i], [x1, y1] = PRICE[i + 1];
    const n = Math.max(1, Math.round((x1 - x0) / 2.2));
    for (let k = 0; k < n; k++) {
      const calm = x0 > HALF + 1225 && x0 < HALF + 1300 ? 5 : 19;
      out.push([x0 + ((x1 - x0) * k) / n, y0 + ((y1 - y0) * k) / n + rnd() * calm]);
    }
  }
  return out;
};
const TICKS = intraday();

const TOP_DIGITS: [number, string][] = [
  ...([[330, "8"], [358, "9."], [405, "9.1"], [455, "0 1"], [495, "6.0"], [540, ",7 7"], [620, "0,6"], [700, ".8 7"], [756, "68"], [811, "9"], [840, ",5"], [889, "3"], [933, "9"], [970, ",4"], [1012, ",8"], [1041, "l"], [1059, "8"], [1103, "4"], [1137, "3"], [1150, "0"], [1164, "3"], [1183, "0"], [1222, "8"], [1236, "5"], [1266, "0"], [1308, ",0"], [1353, "5,0"], [1399, "9"], [1434, "7,5"], [1477, "8"], [1500, ")"], [1522, "4"], [1541, "8"]] as [number, string][]),
  ...([[15, "5"], [50, "3"], [68, "8"], [102, ",8"], [151, ")"], [181, ",5"], [212, "6"], [227, "5"], [253, "6"], [268, "3"], [299, ",9"], [328, "5"], [357, ",0"], [401, ",3"], [440, "3"], [458, "0"], [500, "7"], [537, "8"], [579, "2"], [621, "0"], [662, "7"], [706, "0"], [732, "5"], [750, ",0"], [790, "4"], [832, "6"], [876, "5"], [918, "9"], [960, "1"], [992, "3"], [1012, "3"], [1046, "3"], [1088, "0"], [1122, ",2"], [1172, "3"], [1217, ",3"], [1265, "0"], [1299, "0"], [1341, "0"], [1375, "3"], [1417, "3"]] as [number, string][]).map(([a, t]) => [a + HALF, t] as [number, string]),
];
const LOW_DIGITS: [number, string][] = [
  ...([[16, "9.857,5"], [120, ","], [145, "8"], [186, "2"], [245, "0"], [280, "8"], [320, "8"], [364, "2"], [405, "3"], [425, "l"], [458, "0"], [492, "6"], [540, ",2"], [577, "7"], [597, "3"], [620, "3"], [655, ",4"], [703, "3"], [737, "8"], [752, "5"], [776, "8"], [812, "4"], [840, ",5"], [889, "3"], [933, "4"], [968, ",9"], [1010, ",3"], [1041, "4"], [1060, "3"], [1103, "7"], [1137, "3"], [1151, "3"], [1166, "6"], [1187, "8"], [1221, "0"], [1236, "3"], [1266, "5"], [1308, ",0"], [1353, "5,3"], [1399, "2"], [1434, "5,5"], [1477, "6"], [1496, "5"], [1523, "6"], [1541, "3"]] as [number, string][]),
  ...([[16, "8"], [50, "0"], [68, "0"], [102, ",5"], [150, ")"], [181, ",8"], [212, "3"], [227, "3"], [253, "5"], [268, "6"], [299, ",1"], [328, "3"], [357, ",0"], [401, ",6"], [440, ")"], [459, "8"], [500, "7"], [537, "5"], [578, "4"], [621, "0"], [662, "7"], [706, "0"], [732, "6"], [748, ",8"], [790, "4"], [832, "9"], [876, "5"], [918, "1"], [960, "6"], [992, "3"], [1012, "0"], [1046, "3"], [1088, "0"], [1122, ",2"], [1172, "3"], [1215, ",6"], [1265, "0"], [1299, "7"], [1341, "0"], [1375, "5"], [1417, "8"]] as [number, string][]).map(([a, t]) => [a + HALF, t] as [number, string]),
];
const BAND_LINES = [...SELL_ARROW, ...SELL_DIAMOND].map(([a]) => a + 9);

const PricePane = () => {
  const { ref, w, h, kx, ky, y, x, right } = usePlot(332);
  const px = (v: number) => (v / 2.613 - 5) * kx;
  const py = (v: number) => (v / 3 - 3) * ky;
  const levels = [139, 277, 412, 549, 685, 823, 958].map(py);
  const low = y(314);
  const marks = (list: [number, number][], d: string, fill: string, stroke: string) =>
    list.map(([a, b], i) => <path key={i} d={d} transform={`translate(${px(a)} ${py(b)})`} fill={fill} stroke={stroke} />);
  return (
    <ChartBox ref={ref} $grow={332}>
      <svg width={w} height={h}>
        <defs>
          <linearGradient id="prbg" x2="0" y2="1"><stop stopColor="#e7edff" /><stop offset="1" stopColor="#dae4fe" /></linearGradient>
          <linearGradient id="gold" x2="0" y2="1"><stop stopColor="#f2d000" /><stop offset="1" stopColor="#e0b010" /></linearGradient>
          <clipPath id="plot"><rect x="1" y="18" width={right} height={low - 18} /></clipPath>
          <clipPath id="wide"><rect x="1" y="0" width={right} height={h} /></clipPath>
        </defs>
        <rect x="1" width={right} height={h} fill="url(#prbg)" />
        <GridLines x={x} h={h} right={right} rows={levels} />
        <g clipPath="url(#plot)">
          {TICKS.map(([a, b], i) => i % 23 === 0 && <path key={i} d={`M${px(a)} ${py(b) - 9}v19`} stroke={i % 2 ? "#4cc04c" : "#dd6663"} />)}
          <polyline points={TICKS.map(([a, b]) => `${px(a)},${py(b)}`).join(" ")} fill="none" stroke="#dd6663" strokeWidth="3" />
          {marks(BUY_ARROW, "M0-6L4.500-1H2V6H-2V-1H-4.500Z", "#5f9df8", "#2556b8")}
          {marks(SELL_ARROW, "M0 6L4.500 1H2V-6H-2V1H-4.500Z", "#fba524", "#b8700c")}
          {marks(BUY_DIAMOND, "M0-6L6 0L0 6L-6 0Z", "#5f9df8", "#2f66c8")}
          {marks(SELL_DIAMOND, "M0-6L6 0L0 6L-6 0Z", "#fba524", "#c47a10")}
        </g>
        <g clipPath="url(#wide)">
          <rect x="1" y="1" width={right} height="17" fill="#f4e3c0" />
          <path d={BAND_LINES.map((v) => `M${px(v)} 1v17M${px(v) + 4} 1v17`).join("")} stroke="#f9cf86" opacity="0.8" />
          <rect x="1" y={low} width={right} height={h - low} fill="#c6dcfd" />
          <path d={`M1 ${low}H${right}` + BAND_LINES.map((v) => `M${px(v)} ${low}v18M${px(v) + 3} ${low}v18`).join("")} stroke="#6ea3f5" />
          {TOP_DIGITS.map(([v, t], i) => <text key={i} x={px(v)} y="13">{t}</text>)}
          <text x={px(345)} y="13">Día: +Alto 11.607,7 +Bajo 11.507,8</text>
          {LOW_DIGITS.map(([v, t], i) => <text key={i} x={px(v)} y={h - 5}>{t}</text>)}
          <text x="3" y={h - 3}>© IT-Finance.com <tspan fontStyle="italic">Datos recibidos indicativos</tspan></text>
        </g>
        <Frame h={h} right={right} />
        {["", "11.000", "10.500", "10.000", "9.500", "9.000", "8.500"].map((t, i) => <text key={i} x={right + 7} y={levels[i] + 4} style={i === 3 ? boldAxis : undefined}>{t}</text>)}
        <path d={`M${right} ${py(118)}h5`} stroke="#800" strokeWidth="2" />
        <rect x={right + 5.5} y={py(94) - 8} width="46" height="15" fill="#dfe8f4" stroke="#8295a5" />
        <text x={right + 7} y={py(94) + 4} fill="#dd6663">11.585,4</text>
        <rect x={right + 5.5} y={py(139) - 7} width="46" height="14" fill="url(#gold)" stroke="#a08010" />
        <text x={right + 7} y={py(139) + 4}>11.582,2</text>
        <rect x={right + 5} y={py(184) - 7} width="36" height="15" fill="#8fe08f" />
        <text x={right + 7} y={py(184) + 4}>1m34s</text>
      </svg>
      <PaneTag>Precio
        <PlainButton aria-label="Configurar"><WrenchIcon /></PlainButton><PlainButton aria-label="Ventana"><WindowIcon /></PlainButton><PlainButton aria-label="Cerrar"><CloseIcon /></PlainButton>
        <PlainButton aria-label="Bajar"><ArrowPage /></PlainButton><PlainButton aria-label="Subir"><ArrowPage up /></PlainButton>
      </PaneTag>
    </ChartBox>
  );
};

const TimeAxis = () => {
  const { ref, w, x } = usePlot(21);
  return (
    <AxisBox ref={ref}>
      <svg width={w} height="21">
        {MONTH_MARKS.map(([v, m]) => (
          <g key={v}>
            <path d={`M${Math.round(x(v)) + 0.5} 0v4`} stroke={EDGE} />
            <text x={x(v)} y="16" textAnchor="middle" style={m[0] === "2" ? boldAxis : undefined}>{m}</text>
          </g>
        ))}
      </svg>
    </AxisBox>
  );
};

const Glass = ({ children }: { children?: React.ReactNode }) => (
  <svg width="20" height="20" viewBox="0 0 20 20">
    <path d="M11 11.500L17.500 18" stroke="#000" strokeWidth="3.500" strokeLinecap="round" />
    <circle cx="8" cy="8" r="5.800" fill="#fff" stroke="#111" strokeWidth="1.200" />{children}
  </svg>
);

const LeftIcons = () => (
  <>
    <PlainButton aria-label="Plantillas"><svg width="17" height="19"><rect x="0.500" y="4.500" width="13" height="11" fill="#fff" stroke="#2d78c8" /><path d="M2 13C5 12 6 8 9 6V3L16 7.500L9 12V9.500C7 10 5 13 2 13Z" fill="#4cc850" stroke="#187a20" strokeWidth="0.800" /><path d="M9 14H17L13 18.500Z" stroke="#fff" strokeWidth="0.800" /></svg></PlainButton>
    <PlainButton aria-label="Vincular"><svg width="24" height="20"><g fill="none"><path d="M4.500 2V18" stroke="#000" strokeWidth="3" strokeLinecap="round" /><rect x="1.500" y="1.500" width="6" height="7" rx="3" stroke="#000" strokeWidth="2.400" /><rect x="1.500" y="11.500" width="6" height="7" rx="3" stroke="#000" strokeWidth="2.400" /><path d="M4.500 3V7M4.500 13V17M4.500 9V11" stroke="#fff" strokeWidth="1.200" /></g><path d="M14.500 4V16" stroke="#a02020" /><rect x="12.500" y="6.500" width="4" height="7" fill="#f06060" stroke="#a02020" /><path d="M20.500 0V14" stroke="#118a11" /><rect x="18.500" y="3.500" width="4" height="7" fill="#50d850" stroke="#118a11" /><path d="M13 15.500H21L17 19.500Z" /></svg></PlainButton>
    <PlainButton aria-label="Lista"><svg width="18" height="18"><rect x="2.500" y="1" width="12" height="15" fill="#fff" stroke="#000" strokeWidth="1.500" /><path d="M5 4L8 5M5 8H8M5 11L8 12M5 14H7M10 6L13 4M9 9.500L13 8.500M9 13L13 12" stroke="#000" strokeWidth="1.800" /></svg></PlainButton>
    <PlainButton aria-label="Libro de órdenes"><svg width="17" height="18"><path d="M1 3H8M1 7H8M3 11H8M1 15H8" stroke="#35a840" strokeWidth="3" /><path d="M9 3H13M9 7H16M9 11H16M9 15H14" stroke="#c05560" strokeWidth="3" /><path d="M8.500 0V18" stroke="#444" /></svg></PlainButton>
  </>
);

const RightIcons = () => (
  <>
    <PlainButton aria-label="Configurar gráfico"><svg width="17" height="19" viewBox="0 0 17 19"><path d="M12 0V19" stroke="#118a11" /><rect x="9.500" y="2.500" width="5" height="14" fill="#3dc83d" stroke="#118a11" /><rect x="1.500" y="8.500" width="5" height="8" fill="#e86060" stroke="#a02020" /><path d="M2 15L7 10C6 7 8 4.500 11 4.500L10 7L11.500 8.500L14.500 7.500C14.500 10.500 12 12 9 11.500L4 17Z" fill="#fff" stroke="#000" /></svg></PlainButton>
    <PlainButton aria-label="Ajustar zoom"><svg width="20" height="20"><path d="M11 11L16 16.500" stroke="#000" strokeWidth="3.500" /><circle cx="8" cy="7" r="5.800" fill="#dadada" stroke="#222" /><path d="M17.500 2V12M15.500 4L17.500 1.500L19.500 4M15.500 10L17.500 12.500L19.500 10M1 17.500H11M3 15.500L0.500 17.500L3 19.500M9 15.500L11.500 17.500L9 19.500" fill="none" stroke="#1a22e0" strokeWidth="1.300" /></svg></PlainButton>
    <PlainButton aria-label="Alejar"><Glass><path d="M5 8H11" stroke="#1a22e0" strokeWidth="2" /></Glass></PlainButton>
    <PlainButton aria-label="Acercar"><Glass><path d="M5 8H11M8 5V11" stroke="#1a22e0" strokeWidth="2" /></Glass></PlainButton>
  </>
);

const TradingWindow = () => (
  <Trading>
    <TradeTitle>
      <Candles a="#fff" b="none" la="#fff" lb="#fff" />
      <Symbol><svg width="8" height="5"><path d="M0 0H8L4 5Z" fill="#fff" /></svg>DAX</Symbol>
      <Info>i</Info>
      <Quote>11.582,2 (+0,01%)</Quote>
      15:53:26 Alemania 30 al contado (EUR 1 Mini) (-)
      <WinButtons $c="#fff">
        <PlainButton aria-label="Teclado"><KeyboardIcon /></PlainButton>
        <WinIcons c="#fff" />
      </WinButtons>
    </TradeTitle>
    <Account>
      <Stat>Órdenes: <b>0</b><Cancel /><span>&nbsp;/ <b>0</b></span><Gears /></Stat>
      <Stat>Posición: <b>0</b><Cancel /><span>&nbsp;/ <b>0</b></span><Gears /></Stat>
      <Stat>Gan latente: <b>0,00 €</b></Stat>
      <Stat>Gan día: <Gain>1.301,00 €</Gain></Stat>
    </Account>
    <Toolbar>
      <Tools>
        <Field $w={76} $h={22}>
          <AmountInput defaultValue="100000" aria-label="Cantidad de datos" />
          <Spin><Up /><Down w={7} /></Spin>
        </Field>
        <Field $w={101} $h={22}>
          <NativeSelect $size={11} aria-label="Unidades" defaultValue="(x) unidades"><option>(x) unidades</option></NativeSelect>
          <Drop><Down /></Drop>
        </Field>
        <ToolGap />
        <Field $w={93} $h={22}>
          <NativeSelect $size={11} aria-label="Intervalo" defaultValue="5 minutos"><option>5 minutos</option></NativeSelect>
          <Drop><Down /></Drop>
        </Field>
        <ToolGap />
        <IndicatorButton aria-label="Indicadores"><IndicatorIcon /><span><Down /></span></IndicatorButton>
      </Tools>
      <OrderPad>
        <svg width="7" height="10"><path d="M0 0V9L5 4.500Z" /></svg>
        <PadColumn $w={23}><span /><Square $w={19} $h={20} aria-label="Ajustes"><WrenchIcon size={15} /></Square></PadColumn>
        <PadColumn $w={49}>
          <label htmlFor="qty">Cant</label>
          <Field $w={46} $h={24}><TextInput id="qty" defaultValue="1" /></Field>
        </PadColumn>
        <PadColumn $w={66} $line>
          <span>Límite</span>
          <PadRow><Square $w={27} $h={29} aria-label="Orden límite"><OrderIcon /></Square><Square $w={27} $h={29} aria-label="Orden límite partida"><OrderIcon split /></Square></PadRow>
        </PadColumn>
        <PadColumn $w={66} $line>
          <span>Stop</span>
          <PadRow><Square $w={27} $h={29} aria-label="Orden stop"><OrderIcon stop /></Square><Square $w={27} $h={29} aria-label="Orden stop partida"><OrderIcon stop split /></Square></PadRow>
        </PadColumn>
        <PadColumn $w={70} $line>
          <span>Vender MKT</span>
          <Market><small>11.5</small><b>81,</b><sup>7</sup></Market>
        </PadColumn>
        <PadColumn $w={68}>
          <span>Comprar MKT</span>
          <Market $buy><small>11.5</small><b>82,</b><sup>7</sup></Market>
        </PadColumn>
        <Checks>
          <CheckLine><label><Tick type="checkbox" defaultChecked />S</label><Field $w={30} $h={20}><TextInput aria-label="Stop" defaultValue="10" /></Field></CheckLine>
          <CheckLine><label><Tick type="checkbox" defaultChecked />L</label><Field $w={30} $h={20}><TextInput aria-label="Límite" defaultValue="15" /></Field></CheckLine>
        </Checks>
      </OrderPad>
    </Toolbar>
    <Panes>
      <EquityPane />
      <PositionPane />
      <PricePane />
    </Panes>
    <TimeAxis />
    <StatusBar>
      <LeftIcons />
      <ScrollTrack>
        <ScrollButton aria-label="Anterior"><svg width="5" height="8"><path d="M5 0V8L0 4Z" /></svg></ScrollButton>
        <Thumb><svg width="7" height="8"><path d="M0 1.500H7M0 4.500H7M0 7.500H7" stroke="#dff1f8" /></svg></Thumb>
        <ScrollButton aria-label="Siguiente"><svg width="5" height="8"><path d="M0 0V8L5 4Z" /></svg></ScrollButton>
      </ScrollTrack>
      <RightIcons />
    </StatusBar>
  </Trading>
);

export default function App() {
  return (
    <>
      <Global />
      <Shell>
        <ReportWindow />
        <TradingWindow />
      </Shell>
    </>
  );
}
